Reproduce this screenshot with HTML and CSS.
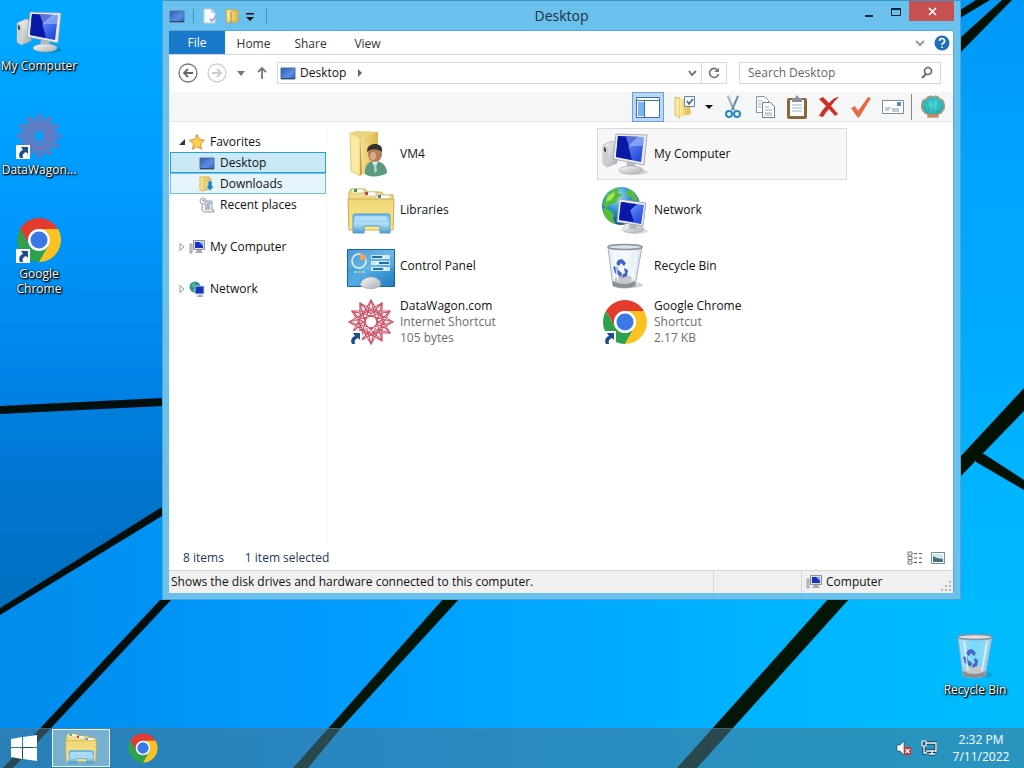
FILE: index.html
```html
<!DOCTYPE html>
<html lang="en">
<head>
<meta charset="utf-8">
<meta name="viewport" content="width=device-width, initial-scale=1">
<title>Desktop</title>
<link rel="stylesheet" href="styles.css">
</head>
<body>
<svg class="sprite" aria-hidden="true">
  <defs>
    <linearGradient id="screen" x1="0" y1="0" x2="1" y2="1"><stop offset="0" stop-color="#1328c8"/><stop offset=".4" stop-color="#0716b0"/><stop offset=".42" stop-color="#5a83f0"/><stop offset="1" stop-color="#1436d8"/></linearGradient>
    <linearGradient id="metal" x1="0" y1="0" x2="1" y2="1"><stop offset="0" stop-color="#fafafa"/><stop offset="1" stop-color="#a9adb2"/></linearGradient>
    <linearGradient id="yellow" x1="0" y1="0" x2="0" y2="1"><stop offset="0" stop-color="#efd677"/><stop offset="1" stop-color="#fbe98f"/></linearGradient>
    <linearGradient id="gold" x1="0" y1="0" x2="1" y2="0"><stop offset="0" stop-color="#fbeba6"/><stop offset="1" stop-color="#dcb64a"/></linearGradient>
    <linearGradient id="tray" x1="0" y1="0" x2="0" y2="1"><stop offset="0" stop-color="#62b4e8"/><stop offset=".5" stop-color="#b4e0f7"/><stop offset="1" stop-color="#4c9bd0"/></linearGradient>
    <linearGradient id="mini" x1="0" y1="0" x2="1" y2="1"><stop offset="0" stop-color="#2b5cb4"/><stop offset=".6" stop-color="#5b8ee6"/><stop offset="1" stop-color="#2d62b8"/></linearGradient>
    <linearGradient id="panel" x1="0" y1="0" x2="1" y2="1"><stop offset="0" stop-color="#2c8bce"/><stop offset=".5" stop-color="#53ade3"/><stop offset="1" stop-color="#2079bd"/></linearGradient>
    <linearGradient id="glass" x1="0" y1="0" x2="1" y2="0"><stop offset="0" stop-color="#dfe9f2" stop-opacity=".75"/><stop offset=".5" stop-color="#eef6fc" stop-opacity=".5"/><stop offset="1" stop-color="#c8d8e6" stop-opacity=".8"/></linearGradient>
    <radialGradient id="globe" cx=".4" cy=".25" r=".8"><stop offset="0" stop-color="#a8e4f8"/><stop offset=".45" stop-color="#2c90cf"/><stop offset="1" stop-color="#0c4690"/></radialGradient>
    <radialGradient id="shell" cx=".5" cy=".4" r=".6"><stop offset="0" stop-color="#4fe0dc"/><stop offset="1" stop-color="#219ea8"/></radialGradient>

    <symbol id="i-computer" viewBox="0 0 48 48">
      <ellipse cx="33" cy="42" rx="14" ry="3" fill="#000" opacity=".14"/>
      <path d="M2 15 11 11l5 2v20L6 37l-4-3z" fill="url(#metal)" stroke="#a6aaac" stroke-width=".6"/>
      <path d="M2 15l5 2v20l-5-3z" fill="#cdd0cf"/><path d="M3 17l2 1v4l-2-1z" fill="#333"/><path d="M4 18h1v1h-1z" fill="#5bf04a"/>
      <path d="M26 32h8l1 8h-10z" fill="#b9bdc2"/>
      <ellipse cx="30" cy="40" rx="12" ry="4" fill="url(#metal)" stroke="#a5a8aa" stroke-width=".6"/>
      <path d="M15 4 46 5 43 35 12 29z" fill="#e8ebed" stroke="#969ea8" stroke-width=".8"/>
      <path d="M17 6 43 7 40 32 15 27z" fill="url(#screen)"/>
      <path d="M17 6 25 7 31 30 15 27z" fill="#0a18a8"/>
      <path d="M25 7 43 7 42 16 28 16z" fill="#b4c9ff" opacity=".5"/>
    </symbol>
    <symbol id="i-network" viewBox="0 0 48 48">
      <circle cx="20" cy="20" r="19" fill="url(#globe)"/>
      <path d="M5 11C9 4 14 3 18 2l-1 5 5 2-5 3-2 5-6 1-4 5-3-5zM2 22l7 2 4 4-1 5 3 5C7 36 2 30 2 22zM27 3c6 2 9 7 10 12l-5-1-3-4-4-1z" fill="#55bd36"/>
      <path d="M7 10l6-4 1 3-4 5-5 2z" fill="#a6e657"/>
      <ellipse cx="35" cy="45" rx="12" ry="3" fill="#777" opacity=".25"/>
      <ellipse cx="32" cy="43" rx="11" ry="4" fill="url(#metal)" stroke="#aaa" stroke-width=".5"/>
      <path d="M29 35h6l1 8h-8z" fill="#b7babd"/>
      <path d="M18 13 45 17 42 40 16 36z" fill="#e8ebed" stroke="#8f9aa8" stroke-width=".8"/>
      <path d="M20 16 43 19 40 38 18 34z" fill="url(#screen)"/><path d="M20 16 27 17 33 36 18 34z" fill="#0a18a8"/>
    </symbol>
    <symbol id="i-userfolder" viewBox="0 0 48 48">
      <path d="M9 1 31 2v38l-19 6z" fill="url(#gold)"/>
      <path d="M3 3 13 8v38L4 41z" fill="#f9e9a5" stroke="#d9bd62" stroke-width=".8"/>
      <path d="M3 3 9 1l20 1-2 1-14 6z" fill="#ead27f"/><path d="M13 9l2 34-2 3z" fill="#c59d39"/>
      <path d="M18 44c-1-9 4-13 10-13s12 4 12 12c-6 4-16 5-22 1z" fill="#5b9b7b"/>
      <path d="M25 31l3 8 3-8z" fill="#e9f2f0"/><path d="M27 34h2l1 7-2 2-1-2z" fill="#a8d5dd"/>
      <ellipse cx="28" cy="24" rx="7" ry="8" fill="#b57b58"/>
      <path d="M20 22c0-6 4-8 8-8s8 2 7 8c-4-3-10-4-15 0z" fill="#33302f"/><ellipse cx="26" cy="26" rx="3" ry="4" fill="#d9aa84"/>
    </symbol>
    <symbol id="i-libraries" viewBox="0 0 48 48">
      <path d="M2 7q0-2 2-4h14l3 3h13l3 3h9v30H2z" fill="#f1db89" stroke="#c9a64b"/>
      <path d="M5 3h11l2 4H5zM16 6h12l2 4H17zM29 9h14v4H29z" fill="#fff" stroke="#d5bb77" stroke-width=".7"/>
      <path d="M7 3h3v3H7z" fill="#339b56"/><path d="M18 6h3v3h-3z" fill="#d63a2a"/><path d="M31 9h3v3h-3z" fill="#3785b4"/>
      <path d="M1 13h46l-1 31H2z" fill="url(#yellow)" stroke="#d0ad4c"/>
      <path d="M6 30q0-2 2-2h33q2 0 2 2v17H33v-6q0-1-1-1H18q-1 0-1 1v6H6z" fill="url(#tray)" stroke="#4d9fd1"/>
      <path d="M8 30h32v4H8z" fill="#eaf8ff" opacity=".45"/>
    </symbol>
    <symbol id="i-control" viewBox="0 0 48 48">
      <path d="M0.500 7.500h47v37h-47z" fill="url(#panel)" stroke="#1a649f"/>
      <path d="M1 8h46v17q-20 7-46 0z" fill="#fff" opacity=".14"/>
      <circle cx="12" cy="19" r="7" fill="none" stroke="#eaf7ff" stroke-width="1.500"/><path d="M13 18v-7a7 7 0 0 1 6 7z" fill="#f2a15b"/>
      <path d="M24 13h19v4H24zM24 19h19v4H24zM24 25h19v4H24z" fill="#cbe7f8"/>
      <path d="M25 14h10v2H25zM32 20h10v2H32zM26 26h10v2H26z" fill="#206ead"/><path d="M36 14h2v2h-2zM29 20h2v2h-2zM37 26h2v2h-2z" fill="#fff"/>
      <path d="M7 30h3M15 30h3" stroke="#70e0ea" stroke-width="2"/><path d="M11 30h3" stroke="#f1ad52" stroke-width="2"/>
      <path d="M13 43c1-5 6-8 11-8s10 3 10 8c-4 5-16 5-21 0z" fill="url(#metal)" stroke="#999" stroke-width=".5"/>
    </symbol>
    <symbol id="i-bin" viewBox="0 0 48 48">
      <ellipse cx="31" cy="43" rx="11" ry="3" fill="#555" opacity=".25"/>
      <path d="M7 5 12 44q12 4 22 0L41 5z" fill="url(#glass)" stroke="#a0aebb"/>
      <path d="M12 39q12 4 22 0v5q-11 4-22 0z" fill="#8a8f94"/><path d="M14 36q9-7 18 0l1 4q-10 4-19 0z" fill="#c5c8ca"/>
      <path d="M17 18l4-1 4 4-2 3-3-3-2 3-3-2zM12 25l4-1 1 4 4 3-1 4-6-4zM23 26l4 2-1 6-5 2 1-4 2-1z" fill="#4165c4"/>
      <path d="M13 9l4 30M36 9l-5 30" stroke="#fff" stroke-width="1.600" opacity=".7"/>
      <ellipse cx="24" cy="5" rx="17" ry="2.500" fill="#dbe3e8" stroke="#88939b" stroke-width="1.500"/>
    </symbol>
    <symbol id="i-chrome" viewBox="0 0 48 48">
      <path d="M5 13A22 22 0 0 1 43 13H24a11 11 0 0 0-9.500 16.500z" fill="#e33b2e"/>
      <path d="M5 13A22 22 0 0 0 24 46L33.500 29.500a11 11 0 0 1-19 0z" fill="#2da14b"/>
      <path d="M43 13A22 22 0 0 1 24 46L33.500 29.500A11 11 0 0 0 24 13z" fill="#fdc221"/>
      <circle cx="24" cy="24" r="11" fill="#fff"/><circle cx="24" cy="24" r="8.500" fill="#3b78e7"/>
    </symbol>
    <symbol id="i-wagon" viewBox="-24 -24 48 48">
      <g fill="none" stroke-linejoin="round" stroke-width="1.200">
        <path d="M0-22 11 19-19-11 22 0-19 11 11-19 0 22-11-19 19 11-22 0 19-11-11 19z"/>
        <path d="M0-22 19 11-19 11zM11-19 11 19-22 0zM19-11 0 22-19-11zM22 0-11 19-11-19z"/>
      </g>
    </symbol>
    <symbol id="i-shortcut" viewBox="0 0 14 14"><path d="M0 0h14v14H0z" fill="#fff"/><path d="M5 2h7v7l-2-2c-3 1-4 3-3 6H4C2 9 4 6 7 5z" fill="#1d4c91"/></symbol>
    <symbol id="i-display" viewBox="0 0 16 14"><path d="M1 2h14v11H1z" fill="url(#mini)" stroke="#53708f"/><path d="M1 12.500h14" stroke="#34475c"/></symbol>
    <symbol id="i-smallpc" viewBox="0 0 16 16"><path d="M1 5h2v9H1z" fill="#ddd" stroke="#888" stroke-width=".8"/><path d="M4.500 1.500h11v9h-11z" fill="#dbe0e6" stroke="#8a93a0"/><path d="M6 3h8v6H6z" fill="#1b2fc3"/><path d="M10 3h4v4z" fill="#8ca8f8"/><path d="M8 11h4l2 3H6z" fill="#a6abb2"/></symbol>
    <symbol id="i-smallnet" viewBox="0 0 16 16"><circle cx="6" cy="6" r="5.500" fill="#2489b9"/><path d="M2 3l4-2v3L3 7zM1 8l4 1v2z" fill="#53bb55"/><path d="M6 5h9v8H6z" fill="#1735bf" stroke="#cbd2db"/><path d="M9 14h4l1 2H8z" fill="#9ba5ad"/></symbol>
  </defs>
</svg>

<div class="screen">
  <svg class="wallpaper" viewBox="0 0 1024 768" preserveAspectRatio="none" aria-hidden="true">
    <defs>
      <linearGradient id="w1" x1="0" y1="0" x2="0" y2="1"><stop offset="0" stop-color="#00a9ff"/><stop offset=".45" stop-color="#009cff"/><stop offset="1" stop-color="#007fe4"/></linearGradient>
      <linearGradient id="w2" x1="0" y1="0" x2="0" y2="1"><stop offset="0" stop-color="#007fde"/><stop offset=".5" stop-color="#0074cd"/><stop offset="1" stop-color="#006fbe"/></linearGradient>
      <linearGradient id="w3" x1="0" y1="0" x2="1" y2="0"><stop offset="0" stop-color="#008cec"/><stop offset=".35" stop-color="#009dff"/><stop offset=".85" stop-color="#00b9ff"/><stop offset="1" stop-color="#00bcff"/></linearGradient>
      <linearGradient id="w4" x1="0" y1="0" x2="0" y2="1"><stop offset="0" stop-color="#0098f8"/><stop offset=".3" stop-color="#00a4ff"/><stop offset="1" stop-color="#00b9ff"/></linearGradient>
    </defs>
    <path fill="url(#w3)" d="M0 0h1024v768H0z"/>
    <path fill="url(#w1)" d="M0 0h600v385L0 410z"/>
    <path fill="url(#w2)" d="M0 410l162-8v110L0 612z"/>
    <path fill="url(#w4)" d="M900 0h124v600H900z"/>
    <path fill="#020f0d" d="M0 406l162-8v8L0 414zM0 608l162-101v9L0 615zM160 600h11L51 728 13 768H3z"/>
    <path fill="#031607" d="M444 598h16L341 728 308 768H293zM829 598h21L733 728 697 768H677z"/>
    <path fill="#031205" d="M960 457l64-69v23l-64 66zM976 453l8 1 40 26v10l-48-28zM960 10l16-10h14l-30 18zM960 38l42-38h10l-52 53z"/>
  </svg>

  <main class="desktop">
    <div class="shortcuts">
      <button class="shortcut"><svg class="icon48"><use href="#i-computer"/></svg><span>My Computer</span></button>
      <button class="shortcut"><span class="icon48 linked wagon-dim"><svg><use href="#i-wagon"/></svg><svg class="arrow"><use href="#i-shortcut"/></svg></span><span>DataWagon...</span></button>
      <button class="shortcut"><span class="icon48 linked"><svg><use href="#i-chrome"/></svg><svg class="arrow"><use href="#i-shortcut"/></svg></span><span>Google Chrome</span></button>
    </div>
    <button class="shortcut recycle"><svg class="icon48"><use href="#i-bin"/></svg><span>Recycle Bin</span></button>

    <section class="window" aria-label="Desktop">
      <header class="titlebar">
        <div class="quick">
          <svg class="icon16"><use href="#i-display"/></svg>
          <i class="divider"></i>
          <button aria-label="Properties"><svg class="icon16" viewBox="0 0 16 16"><path d="M2 1h8l3 3v11H2z" fill="#f6fafc" stroke="#bdd3dc"/><path d="M10 1v3h3" fill="none" stroke="#9ab"/><path d="M8 11l2 2 4-5" stroke="#b9a5d4" stroke-width="2" fill="none"/></svg></button>
          <button aria-label="New folder"><svg class="icon16" viewBox="0 0 16 16"><path d="M2 2l5-1 1 2 6-1v12H7l-4 1z" fill="url(#gold)" stroke="#d5a935"/><path d="M7 4v11" stroke="#b98f20"/></svg></button>
          <button class="customize" aria-label="Customize"><svg class="icon16" viewBox="0 0 16 16"><path d="M4 5h8v1.500H4zM4 9h8l-4 4z" fill="#111"/></svg></button>
          <i class="divider"></i>
        </div>
        <h1>Desktop</h1>
        <div class="caption">
          <button aria-label="Minimize"><svg viewBox="0 0 16 16"><path d="M4 12h8v2H4z" fill="#16273a"/></svg></button>
          <button aria-label="Maximize"><svg viewBox="0 0 16 16"><path d="M3.500 5.500h9v7h-9z" fill="none" stroke="#16273a"/><path d="M3 6h10" stroke="#16273a" stroke-width="2"/></svg></button>
          <button class="close" aria-label="Close"><svg viewBox="0 0 16 16"><path d="M5 5l7 7M12 5l-7 7" stroke="#fff" stroke-width="1.700"/></svg></button>
        </div>
      </header>

      <div class="body">
        <nav class="tabs">
          <button class="file">File</button><button>Home</button><button>Share</button><button>View</button>
          <span class="spacer"></span>
          <button class="bare" aria-label="Expand ribbon"><svg class="icon16" viewBox="0 0 16 16"><path d="M4 6l4 4 4-4" fill="none" stroke="#999" stroke-width="2"/></svg></button>
          <button class="bare" aria-label="Help"><svg class="icon16" viewBox="0 0 16 16"><circle cx="8" cy="8" r="7.500" fill="#1b6fbb"/><path d="M5.500 6a2.500 2.500 0 1 1 3.500 2.300Q8 9 8 10M8 11.500v1.500" fill="none" stroke="#fff" stroke-width="1.700"/></svg></button>
        </nav>

        <div class="address-row">
          <div class="history">
            <button aria-label="Back"><svg viewBox="0 0 20 20"><circle cx="10" cy="10" r="9" fill="none" stroke="#777" stroke-width="1.300"/><path d="M15 10H6M10 6l-4 4 4 4" fill="none" stroke="#666" stroke-width="1.800"/></svg></button>
            <button aria-label="Forward"><svg viewBox="0 0 20 20"><circle cx="10" cy="10" r="9" fill="none" stroke="#ccc" stroke-width="1.300"/><path d="M5 10h9M10 6l4 4-4 4" fill="none" stroke="#ccc" stroke-width="1.800"/></svg></button>
            <button class="narrow" aria-label="Recent locations"><svg viewBox="0 0 10 20"><path d="M1 8h8l-4 5z" fill="#777"/></svg></button>
            <button class="up" aria-label="Up"><svg viewBox="0 0 12 20"><path d="M6 16V6M2 9l4-4 4 4" fill="none" stroke="#777" stroke-width="1.800"/></svg></button>
          </div>
          <div class="address">
            <svg class="icon16"><use href="#i-display"/></svg>
            <a href="#desktop">Desktop</a>
            <svg class="crumb" viewBox="0 0 6 10"><path d="M1 1l4 4-4 4z" fill="#666"/></svg>
            <span class="spacer"></span>
            <button aria-label="Previous locations"><svg class="icon16" viewBox="0 0 16 16"><path d="M5 6l3 4 4-4" fill="none" stroke="#777" stroke-width="2"/></svg></button>
            <button class="refresh" aria-label="Refresh"><svg class="icon16" viewBox="0 0 16 16"><path d="M11.500 5A4.500 4.500 0 1 0 12.500 9" fill="none" stroke="#777" stroke-width="1.700"/><path d="M13 3v4H8z" fill="#777"/></svg></button>
          </div>
          <label class="search">
            <input type="search" placeholder="Search Desktop" aria-label="Search Desktop">
            <svg class="icon16" viewBox="0 0 16 16"><circle cx="10" cy="6" r="3.500" fill="none" stroke="#666" stroke-width="1.700"/><path d="M8 9l-4 4" stroke="#666" stroke-width="2"/></svg>
          </label>
        </div>

        <div class="toolbar">
          <button class="active" aria-label="Navigation pane"><svg viewBox="0 0 24 24"><path d="M0.500 2.500h23v20h-23z" fill="#fff" stroke="#3f6fa5"/><path d="M1 5.500h22" stroke="#3f6fa5"/><path d="M2 7h6v14H2z" fill="#76b4f4"/><path d="M8.500 6v16" stroke="#3f6fa5"/></svg></button>
          <button class="folder-options" aria-label="Folder options"><svg viewBox="0 0 24 24"><path d="M2 2l5 1v20l-5-3z" fill="#fbe8a0" stroke="#d8bb62"/><path d="M7 4h10v15l-10 3z" fill="url(#gold)"/><path d="M11.500 1.500h10v10h-10z" fill="#f7faff" stroke="#6483a6"/><path d="M14 6l2 3 4-5" fill="none" stroke="#345d9b" stroke-width="1.500"/><circle cx="15" cy="17" r="3" fill="#ecc65a"/></svg><svg class="drop" viewBox="0 0 8 8"><path d="M0 2h8L4 6z" fill="#111"/></svg></button>
          <button aria-label="Cut"><svg viewBox="0 0 24 24"><path d="M7 1l6 14M17 1l-6 14" stroke="#6b8da5" stroke-width="2"/><path d="M7 1l5 10" stroke="#dae8ef"/><circle cx="8" cy="19" r="3" fill="none" stroke="#2588c1" stroke-width="2"/><circle cx="16" cy="19" r="3" fill="none" stroke="#2588c1" stroke-width="2"/></svg></button>
          <button aria-label="Copy"><svg viewBox="0 0 24 24"><path d="M3.500 1.500h8l4 4v12h-12z" fill="#fff" stroke="#8798aa"/><path d="M9.500 7.500h8l4 4v11h-12z" fill="#fff" stroke="#687e98"/><path d="M5 6h4M5 9h3M5 12h3M12 12h4M12 15h7M12 18h7M12 20h7" stroke="#93a8c2"/></svg></button>
          <button aria-label="Paste"><svg viewBox="0 0 24 24"><rect x="2" y="3" width="20" height="21" rx="2" fill="#8a673b"/><path d="M5 5h14v16H5z" fill="#fbfdff"/><path d="M7 10h10M7 13h10M7 16h10" stroke="#a3b6c9"/><path d="M7 3h3l2-3 2 3h3v4H7z" fill="#899097"/></svg></button>
          <button aria-label="Delete"><svg viewBox="0 0 24 24"><path d="M2 4l4-2 6 6Q17 2 22 2q-5 4-8 9l7 8-3 2-6-7q-4 4-6 8l-4-1q3-6 7-10z" fill="#cf2f27"/></svg></button>
          <button aria-label="Rename"><svg viewBox="0 0 24 24"><path d="M2 13l4-2 3 5L19 2l3 1L11 21l-2 2z" fill="#e8683f"/></svg></button>
          <button aria-label="Properties"><svg viewBox="0 0 24 24"><path d="M1.500 5.500h21v13h-21z" fill="#fff" stroke="#7b8d9e"/><path d="M16 7h4v4h-4z" fill="#5391bd"/><path d="M4 13h6M4 15h4M11 14h7M11 16h7" stroke="#7996b4"/></svg></button>
          <i class="divider"></i>
          <button aria-label="Shell"><svg viewBox="0 0 24 24"><path d="M4 18Q-1 13 1 9q0-4 4-5 3-4 7-2 4-2 7 2 4 1 4 5 2 4-3 9l-3 1v3H7v-3z" fill="url(#shell)" stroke="#b59b7c" stroke-width="1.500"/><path d="M12 19V4M9 19L6 7M15 19l3-12M7 19l-4-8M17 19l4-8" stroke="#1b8e99" stroke-width=".5"/><path d="M6 19h12l-2 3H8z" fill="#c58560"/></svg></button>
        </div>

        <div class="content">
          <nav class="tree">
            <a href="#favorites" class="group"><svg class="twist" viewBox="0 0 8 8"><path d="M7 1v6H1z" fill="#333"/></svg><svg class="icon16" viewBox="0 0 16 16"><path d="M8 0.500l2.300 5 5.200.7-4 3.600 1 5.500L8 12.500l-4.500 2.800 1-5.500-4-3.600 5.200-.7z" fill="#fdd04b" stroke="#e7882b"/></svg>Favorites</a>
            <a href="#desktop" class="leaf selected"><svg class="icon16"><use href="#i-display"/></svg>Desktop</a>
            <a href="#downloads" class="leaf hover"><svg class="icon16" viewBox="0 0 16 16"><path d="M1 1h9l2 2v10l-9 2-2-1z" fill="url(#gold)" stroke="#ddb750"/><path d="M5 2v12" stroke="#e3c15f"/><path d="M9 5h4v5h2l-4 5-4-5h2z" fill="#1b80cb" stroke="#d5edfa" stroke-width=".6"/></svg>Downloads</a>
            <a href="#recent" class="leaf"><svg class="icon16" viewBox="0 0 16 16"><path d="M3 4h10v9h2v2H5l-2-2z" fill="#eef1f3" stroke="#8f9ba6"/><circle cx="4" cy="4" r="3" fill="#fff" stroke="#9ca7b4"/><path d="M4 2v2h2M6 8h5M6 10h5M8 6h4M6 12h5" fill="none" stroke="#75849a"/></svg>Recent places</a>
            <a href="#computer" class="group apart"><svg class="twist" viewBox="0 0 8 8"><path d="M2 0.500l4 3.500-4 3.500z" fill="#fff" stroke="#999"/></svg><svg class="icon16"><use href="#i-smallpc"/></svg>My Computer</a>
            <a href="#network" class="group apart"><svg class="twist" viewBox="0 0 8 8"><path d="M2 0.500l4 3.500-4 3.500z" fill="#fff" stroke="#999"/></svg><svg class="icon16"><use href="#i-smallnet"/></svg>Network</a>
          </nav>
          <div class="files">
            <button class="item"><svg class="icon48"><use href="#i-userfolder"/></svg><span>VM4</span></button>
            <button class="item picked"><svg class="icon48"><use href="#i-computer"/></svg><span>My Computer</span></button>
            <button class="item"><svg class="icon48"><use href="#i-libraries"/></svg><span>Libraries</span></button>
            <button class="item"><svg class="icon48"><use href="#i-network"/></svg><span>Network</span></button>
            <button class="item"><svg class="icon48"><use href="#i-control"/></svg><span>Control Panel</span></button>
            <button class="item"><svg class="icon48"><use href="#i-bin"/></svg><span>Recycle Bin</span></button>
            <button class="item"><span class="icon48 linked wagon"><svg><use href="#i-wagon"/></svg><svg class="arrow"><use href="#i-shortcut"/></svg></span><span>DataWagon.com<small>Internet Shortcut</small><small>105 bytes</small></span></button>
            <button class="item"><span class="icon48 linked"><svg><use href="#i-chrome"/></svg><svg class="arrow"><use href="#i-shortcut"/></svg></span><span>Google Chrome<small>Shortcut</small><small>2.17 KB</small></span></button>
          </div>
        </div>

        <div class="summary">
          <span>8 items</span><span>1 item selected</span><span class="spacer"></span>
          <button aria-label="Details view"><svg class="icon16" viewBox="0 0 16 16"><path d="M1 2h4v3H1zM1 6.500h4v3H1zM1 11h4v3H1z" fill="#fff" stroke="#777"/><path d="M7 3.500h3M12 3.500h3M7 8h3M12 8h3M7 12.500h3M12 12.500h3" stroke="#555"/></svg></button>
          <button aria-label="Thumbnail view"><svg class="icon16" viewBox="0 0 16 16"><path d="M1.500 2.500h13v11h-13z" fill="#fff" stroke="#6a93a8"/><path d="M3 4h10v8H3z" fill="#d0e8f1"/><path d="M3 6l4 2 6 1v3H3z" fill="#4d7080"/></svg></button>
        </div>
        <footer class="statusbar">
          <span class="hint">Shows the disk drives and hardware connected to this computer.</span>
          <span class="blank"></span>
          <span class="zone"><svg class="icon16"><use href="#i-smallpc"/></svg>Computer</span>
          <svg class="grip" viewBox="0 0 10 10"><path d="M8 0h2v2H8zM8 4h2v2H8zM4 4h2v2H4zM8 8h2v2H8zM4 8h2v2H4zM0 8h2v2H0z" fill="#b5b5b5"/></svg>
        </footer>
      </div>
    </section>
  </main>

  <footer class="taskbar">
    <button class="start" aria-label="Start"><svg viewBox="0 0 28 28"><path d="M1 5l11-2v10H1zM13 3l14-2v12H13zM1 14h11v11L1 23zM13 14h14v13l-14-2z" fill="#fff"/></svg></button>
    <button class="task running" aria-label="File Explorer"><svg><use href="#i-libraries"/></svg></button>
    <button class="task chrome" aria-label="Google Chrome"><svg><use href="#i-chrome"/></svg></button>
    <span class="spacer"></span>
    <button class="tray" aria-label="Volume"><svg class="icon16" viewBox="0 0 16 16"><path d="M1 5h3l4-4v14l-4-4H1z" fill="#fff" stroke="#234" stroke-width=".6"/><path d="M8 7h7v8H8z" fill="#d32f2f"/><path d="M9.500 9l4 4M13.500 9l-4 4" stroke="#fff" stroke-width="1.500"/></svg></button>
    <button class="tray" aria-label="Network"><svg class="icon16" viewBox="0 0 16 16"><path d="M5 3h10v8H5M8 14h6M11 11v3M3 6v7h3" fill="none" stroke="#123" stroke-width="3"/><path d="M5 3h10v8H5M8 14h6M11 11v3M3 6v7h3" fill="none" stroke="#fff" stroke-width="1.400"/><path d="M1 1h4v5H1z" fill="#357" stroke="#fff"/></svg></button>
    <time class="clock"><span>2:32 PM</span><span>7/11/2022</span></time>
  </footer>
</div>
</body>
</html>
```
FILE: styles.css
```css
* { box-sizing: border-box; }

body {
  margin: 0;
  font: 12px/16px "Open Sans", "Noto Sans", sans-serif;
  color: #111;
}

button, input { font: inherit; color: inherit; }
button { border: 0; padding: 0; background: none; }
a { color: inherit; text-decoration: none; }
svg { display: block; flex: none; }

.sprite { position: absolute; width: 0; height: 0; }
.spacer { flex: 1; }
.icon16 { width: 16px; height: 16px; }
.icon48 { width: 48px; height: 48px; flex: none; }
.divider { width: 1px; height: 14px; background: #3f8fc0; }

.screen {
  position: relative;
  display: flex;
  flex-direction: column;
  min-height: 100vh;
  overflow: hidden;
}
.wallpaper { position: absolute; inset: 0; width: 100%; height: 100%; }

/* Desktop */
.desktop { position: relative; flex: 1; }
.shortcuts {
  display: grid;
  grid-auto-rows: 88px;
  row-gap: 16px;
  width: 78px;
}
.shortcut {
  display: flex;
  flex-direction: column;
  align-items: center;
  gap: 2px;
  width: 78px;
  padding-top: 8px;
  color: #fff;
  line-height: 15px;
  text-shadow: 1px 1px 2px #000, 1px 1px 1px #000, 0 0 2px #000;
}
.recycle { position: absolute; right: 10px; bottom: 31px; }

.linked { position: relative; }
.linked svg { width: 48px; height: 48px; }
.linked .arrow { position: absolute; left: 1px; bottom: 1px; width: 14px; height: 14px; stroke: none; }
.wagon { stroke: #d0576c; }
.wagon-dim { stroke: #8070ae; }

/* Window */
.window {
  position: absolute;
  inset: 0 63px 128px 162px;
  display: flex;
  flex-direction: column;
  padding: 0 6px 6px;
  background: #6bc1ee;
  border: 1px solid #4fa4d0;
  border-top-color: #3a94c8;
}
.titlebar {
  display: grid;
  grid-template-columns: 1fr auto 1fr;
  height: 29px;
}
.titlebar h1 { margin: 0; font-size: 14px; font-weight: 400; line-height: 30px; color: #1d2f3e; }
.quick { display: flex; align-items: center; gap: 6px; }
.quick .divider { margin: 0 2px; }
.quick .customize { margin-left: -4px; }
.caption { display: flex; justify-content: flex-end; align-items: flex-start; }
.caption button { display: grid; place-items: center; width: 27px; height: 20px; }
.caption svg { width: 16px; height: 16px; }
.caption .close { width: 45px; background: #c75050; }

.body {
  flex: 1;
  display: flex;
  flex-direction: column;
  min-height: 0;
  background: #fff;
  border: 1px solid #58a9d3;
  border-width: 1px 1px 0 0;
}

.tabs { display: flex; height: 24px; border-bottom: 1px solid #d5d9dc; color: #333; }
.tabs button { width: 57px; padding-top: 2px; }
.tabs .file { width: 56px; padding: 0; background: #1979ca; color: #fff; }
.tabs .bare { display: grid; place-items: center; width: 22px; padding: 0; }

.address-row { display: flex; align-items: center; gap: 12px; height: 37px; padding: 0 12px 1px 9px; }
.history { display: flex; align-items: center; gap: 9px; margin-right: -4px; }
.history svg { width: 20px; height: 20px; }
.history .narrow svg { width: 10px; }
.history .up svg { width: 14px; }
.address {
  flex: 1;
  display: flex;
  align-items: center;
  height: 22px;
  padding-left: 2px;
  border: 1px solid #d9d9d9;
}
.address a { margin: 0 11px 0 4px; }
.address .crumb { width: 6px; height: 10px; }
.address button { display: grid; place-items: center; width: 18px; height: 20px; }
.address .refresh { width: 25px; border-left: 1px solid #d9d9d9; }
.search {
  display: flex;
  align-items: center;
  width: 202px;
  height: 22px;
  padding: 0 6px 0 8px;
  border: 1px solid #d9d9d9;
}
.search input { flex: 1; min-width: 0; border: 0; padding: 0; outline: 0; background: none; }
.search input::placeholder { color: #666; opacity: 1; }

.toolbar {
  display: flex;
  align-items: center;
  justify-content: flex-end;
  height: 30px;
  padding-right: 4px;
  background: #f5f6f7;
  border-bottom: 1px solid #e6e7e8;
}
.toolbar button { display: grid; place-items: center; width: 32px; height: 30px; }
.toolbar svg { width: 24px; height: 24px; }
.toolbar .active { background: #b9d7f8; border: 1px solid #6f9fd4; }
.toolbar .folder-options { display: flex; align-items: center; gap: 8px; width: 53px; padding-left: 9px; }
.toolbar .drop { width: 8px; height: 8px; }
.toolbar .divider { height: 26px; margin: 0 5px 0 2px; background: #888; }

.content { flex: 1; display: flex; min-height: 0; padding-top: 6px; }
.tree { flex: none; width: 158px; padding: 3px 0 3px 1px; border-right: 1px solid #fafafa; }
.tree a { display: flex; align-items: center; gap: 5px; height: 21px; border: 1px solid transparent; }
.tree .group { padding-left: 7px; }
.tree .twist { width: 8px; height: 8px; margin-right: -2px; }
.tree .leaf { padding-left: 28px; gap: 5px; }
.tree .selected { background: #cbe8f6; border-color: #26a0da; }
.tree .hover { background: #e5f3fb; border-color: #70c0e7; }
.tree .apart { margin-top: 21px; }

.files {
  flex: 1;
  display: grid;
  grid-template-columns: repeat(auto-fill, 250px);
  grid-auto-rows: 52px;
  gap: 4px;
  padding-left: 16px;
}
.item {
  display: flex;
  align-items: center;
  gap: 5px;
  padding-left: 3px;
  border: 1px solid transparent;
  text-align: left;
}
.item small { display: block; font-size: 12px; color: #6d6d6d; }
.picked { background: #f7f7f7; border-color: #dadada; }

.summary { display: flex; align-items: center; height: 24px; gap: 21px; padding: 0 7px 0 14px; color: #1e395b; }
.summary button + button { margin-left: -14px; }

.statusbar { display: flex; align-items: stretch; height: 23px; background: #f0f0f0; border-top: 1px solid #d7d7d7; line-height: 22px; }
.hint { flex: 1; padding-left: 2px; }
.blank { width: 88px; border-left: 1px solid #d7d7d7; }
.zone { display: flex; align-items: center; gap: 4px; width: 140px; padding-left: 4px; border-left: 1px solid #d7d7d7; }
.grip { align-self: flex-end; width: 10px; height: 10px; margin: 0 2px 2px 0; }

/* Taskbar */
.taskbar {
  position: relative;
  display: flex;
  align-items: center;
  height: 40px;
  background: rgba(74, 116, 138, .55);
  box-shadow: inset 0 1px rgba(90, 130, 150, .5);
  color: #fff;
}
.start { width: 52px; padding-left: 10px; }
.start svg { width: 28px; height: 28px; }
.task { display: grid; place-items: center; width: 58px; height: 38px; }
.task svg { width: 32px; height: 32px; }
.running { background: rgba(190, 215, 225, .55); border: 1px solid #e8f4fa; }
.chrome { margin-left: 4px; }
.tray { display: grid; place-items: center; width: 25px; }
.clock { display: flex; flex-direction: column; align-items: center; width: 80px; margin-right: 3px; line-height: 17px; }
```
